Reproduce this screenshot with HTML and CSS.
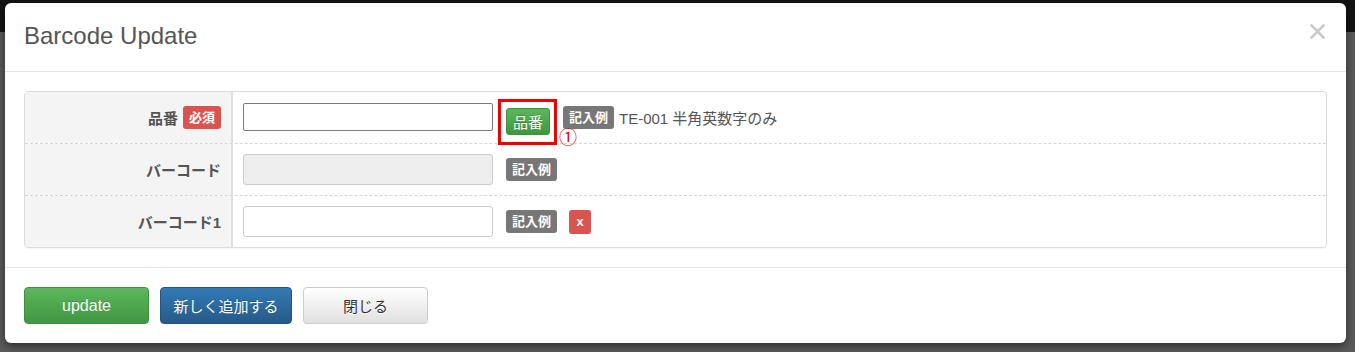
FILE: index.html
```html
<!DOCTYPE html>
<html lang="ja">
<head>
<meta charset="utf-8">
<title>Barcode Update</title>
<link rel="stylesheet" href="styles.css">
</head>
<body>
<div class="backdrop">
  <div class="modal">
    <div class="modal-header">
      <h4 class="modal-title">Barcode Update</h4>
      <button class="close" type="button" aria-label="close">
        <svg width="15" height="15" viewBox="0 0 15 15"><path d="M1.5 1.5 L13.5 13.5 M13.5 1.5 L1.5 13.5" stroke="#c9c9c9" stroke-width="2.6" stroke-linecap="square" fill="none"/></svg>
      </button>
    </div>
    <div class="modal-body">
      <div class="form-table">
        <div class="row">
          <div class="label-cell"><span class="label-text">品番</span><span class="badge badge-red">必須</span></div>
          <div class="field-cell">
            <input class="input input-active" type="text">
            <span class="btn-wrap">
              <button class="btn-green" type="button">品番</button>
              <span class="highlight"></span>
              <span class="marker">①</span>
            </span>
            <span class="badge badge-gray">記入例</span>
            <span class="hint">TE-001 半角英数字のみ</span>
          </div>
        </div>
        <div class="row">
          <div class="label-cell"><span class="label-text">バーコード</span></div>
          <div class="field-cell">
            <input class="input input-disabled" type="text" disabled>
            <span class="badge badge-gray">記入例</span>
          </div>
        </div>
        <div class="row row-last">
          <div class="label-cell"><span class="label-text">バーコード1</span></div>
          <div class="field-cell">
            <input class="input" type="text">
            <span class="badge badge-gray">記入例</span>
            <button class="btn-x" type="button">x</button>
          </div>
        </div>
      </div>
    </div>
    <div class="modal-footer">
      <button class="btn btn-success" type="button">update</button>
      <button class="btn btn-primary" type="button">新しく追加する</button>
      <button class="btn btn-default" type="button">閉じる</button>
    </div>
  </div>
</div>
</body>
</html>
```

FILE: styles.css
```css
html, body {
  margin: 0;
  padding: 0;
}
body {
  width: 1355px;
  height: 352px;
  overflow: hidden;
  background: linear-gradient(#141414 0, #141414 32px, #5a5a5a 32px, #5a5a5a 100%);
  font-family: "Liberation Sans", "Noto Sans CJK JP", sans-serif;
  color: #555;
}
.backdrop {
  padding: 3px 0 0 5px;
}
.modal {
  width: 1341px;
  height: 340px;
  box-sizing: border-box;
  background: #fff;
  border-radius: 6px;
  box-shadow: 0 3px 9px rgba(0, 0, 0, 0.5);
  display: flex;
  flex-direction: column;
}
.modal-header {
  height: 69px;
  box-sizing: border-box;
  padding: 19px 21px 0 19px;
  border-bottom: 1px solid #e5e5e5;
  display: flex;
  justify-content: space-between;
  align-items: flex-start;
}
.modal-title {
  margin: 0;
  font-size: 24px;
  line-height: 28px;
  font-weight: normal;
  color: #555;
}
.close {
  margin-top: 2px;
  padding: 0;
  border: 0;
  background: none;
  width: 15px;
  height: 15px;
  display: block;
}
.close svg {
  display: block;
}
.modal-body {
  padding: 19px;
}
.form-table {
  border: 1px solid #dcdcdc;
  border-radius: 4px;
  overflow: hidden;
  box-shadow: 0 1px 1px rgba(0, 0, 0, 0.04);
}
.row {
  display: grid;
  grid-template-columns: 208px 1fr;
  height: 52px;
  box-sizing: border-box;
  border-bottom: 1px dashed #d6d6d6;
}
.row-last {
  height: 51px;
  border-bottom: 0;
}
.label-cell {
  background: #f4f4f4;
  border-right: 2px solid #dedede;
  display: flex;
  justify-content: flex-end;
  align-items: center;
  padding-right: 10px;
  gap: 5px;
}
.label-text {
  font-size: 15px;
  font-weight: bold;
  color: #555;
}
.field-cell {
  display: flex;
  align-items: center;
  padding-left: 10px;
}
.input {
  width: 250px;
  height: 31px;
  box-sizing: border-box;
  border: 1px solid #cccccc;
  border-radius: 3px;
  background: #fff;
  margin: 0;
  padding: 0 8px;
  font-size: 14px;
}
.input-active {
  height: 28px;
  border-color: #7a7a7a;
  border-radius: 2px;
  margin-top: -1px;
}
.input-disabled {
  background: #eeeeee;
}
.badge {
  display: inline-block;
  height: 23px;
  line-height: 23px;
  padding: 0 6px;
  border-radius: 3px;
  color: #fff;
  font-size: 13px;
  font-weight: bold;
  white-space: nowrap;
}
.badge-red {
  background: #d9534f;
}
.badge-gray {
  background: #777;
  margin-left: 13px;
}
.btn-wrap {
  position: relative;
  margin-left: 13px;
  display: inline-block;
  height: 27px;
  margin-top: 7px;
}
.btn-green {
  display: block;
  width: 44px;
  height: 27px;
  padding: 0;
  border: 1px solid #3e8f3e;
  border-radius: 3px;
  background: linear-gradient(#5cb85c, #419641);
  color: #fff;
  font-family: "Noto Sans CJK JP", sans-serif;
  font-size: 15px;
  line-height: 25px;
  text-shadow: 0 -1px 0 rgba(0, 0, 0, 0.2);
}
.highlight {
  position: absolute;
  left: -8px;
  top: -9px;
  width: 59px;
  height: 46px;
  box-sizing: border-box;
  border: 3px solid #f00000;
}
.marker {
  position: absolute;
  left: 53px;
  top: 17px;
  color: #e60000;
  font-family: "Noto Sans CJK JP", sans-serif;
  font-size: 18px;
  line-height: 22px;
}
.hint {
  margin-left: 5px;
  font-size: 15px;
  color: #555;
}
.btn-x {
  margin-left: 12px;
  width: 22px;
  height: 24px;
  padding: 0;
  border: 0;
  border-radius: 3px;
  background: #d9534f;
  color: #fff;
  font-family: "Liberation Sans", sans-serif;
  font-size: 13px;
  font-weight: bold;
  line-height: 22px;
}
.modal-footer {
  border-top: 1px solid #e5e5e5;
  padding: 19px 19px 0 19px;
  display: flex;
  gap: 11px;
}
.btn {
  height: 37px;
  box-sizing: border-box;
  border-radius: 4px;
  font-family: "Liberation Sans", "Noto Sans CJK JP", sans-serif;
  font-size: 15px;
  padding: 0;
  text-shadow: 0 -1px 0 rgba(0, 0, 0, 0.2);
}
.btn-success {
  width: 125px;
  font-size: 16px;
  color: #fff;
  border: 1px solid #3e8f3e;
  background: linear-gradient(#5cb85c, #419641);
}
.btn-primary {
  width: 132px;
  color: #fff;
  border: 1px solid #245580;
  background: linear-gradient(#337ab7, #265a88);
}
.btn-default {
  width: 125px;
  color: #333;
  border: 1px solid #cccccc;
  background: linear-gradient(#ffffff, #e0e0e0);
  text-shadow: 0 1px 0 #fff;
}
```
